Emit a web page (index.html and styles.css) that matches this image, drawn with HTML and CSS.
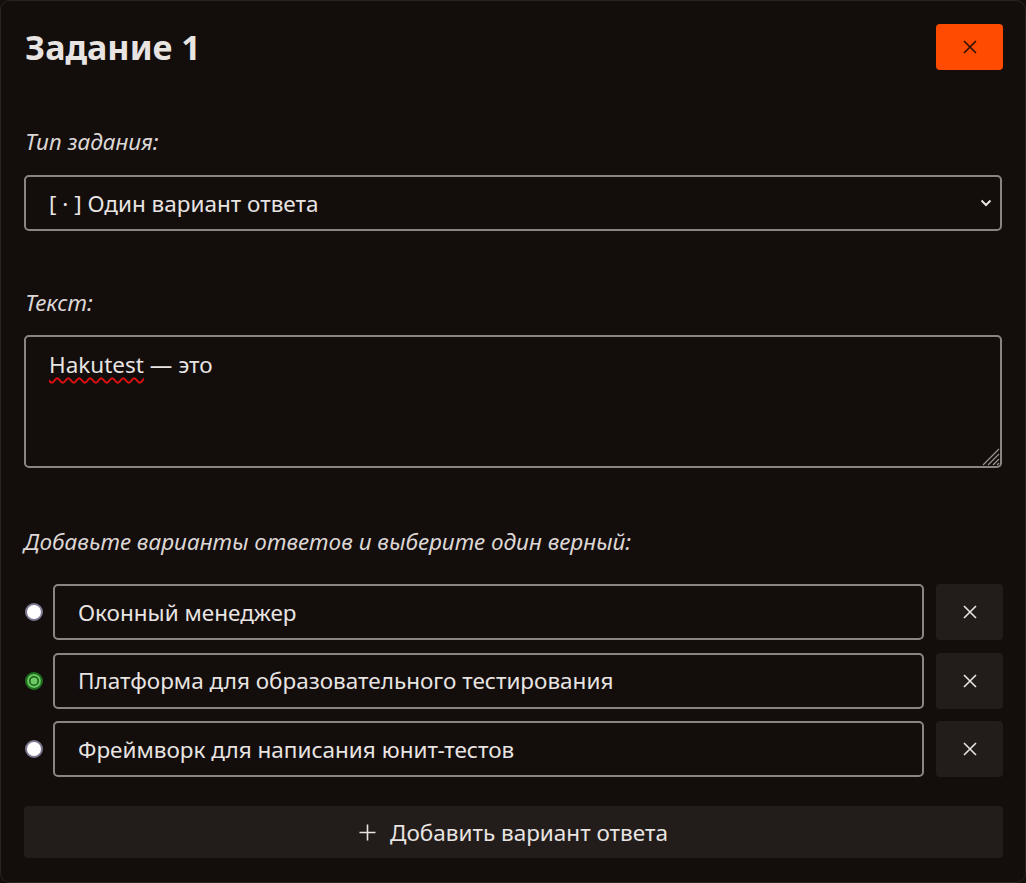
FILE: index.html
```html
<!DOCTYPE html>
<html lang="ru">
<head>
<meta charset="utf-8">
<title>Задание 1</title>
<link rel="stylesheet" href="styles.css">
</head>
<body>
<div class="card">
  <div class="header">
    <h1 class="title">Задание 1</h1>
    <button class="close-btn" aria-label="Закрыть">
      <svg width="16" height="16" viewBox="0 0 16 16"><path d="M2 2L14 14M14 2L2 14" stroke="#2a120a" stroke-width="1.6" fill="none"/></svg>
    </button>
  </div>

  <div class="label label-type">Тип задания:</div>
  <div class="select">
    <span>[ · ] Один вариант ответа</span>
    <svg class="chevron" width="12" height="8" viewBox="0 0 12 8"><path d="M1.5 1.5L6 6L10.5 1.5" stroke="#e8e4e2" stroke-width="2" fill="none"/></svg>
  </div>

  <div class="label label-text">Текст:</div>
  <div class="textarea">
    <span class="spell">Hakutest</span> — это
    <svg class="grip" width="20" height="20" viewBox="0 0 20 20"><path d="M19 3L3 19M19 8L8 19M19 13L13 19M19 17L17 19" stroke="#9a9593" stroke-width="1.2" fill="none"/></svg>
  </div>

  <div class="label label-answers">Добавьте варианты ответов и выберите один верный:</div>
  <div class="answers">
    <div class="answer">
      <span class="radio"></span>
      <div class="input">Оконный менеджер</div>
      <button class="del-btn" aria-label="Удалить"><svg width="16" height="16" viewBox="0 0 16 16"><path d="M2 2L14 14M14 2L2 14" stroke="#e8e4e2" stroke-width="1.6" fill="none"/></svg></button>
    </div>
    <div class="answer">
      <span class="radio checked"></span>
      <div class="input">Платформа для образовательного тестирования</div>
      <button class="del-btn" aria-label="Удалить"><svg width="16" height="16" viewBox="0 0 16 16"><path d="M2 2L14 14M14 2L2 14" stroke="#e8e4e2" stroke-width="1.6" fill="none"/></svg></button>
    </div>
    <div class="answer">
      <span class="radio"></span>
      <div class="input">Фреймворк для написания юнит-тестов</div>
      <button class="del-btn" aria-label="Удалить"><svg width="16" height="16" viewBox="0 0 16 16"><path d="M2 2L14 14M14 2L2 14" stroke="#e8e4e2" stroke-width="1.6" fill="none"/></svg></button>
    </div>
  </div>

  <button class="add-btn">
    <svg width="17" height="17" viewBox="0 0 17 17"><path d="M8.5 0.5V16.5M0.5 8.5H16.5" stroke="#e8e4e2" stroke-width="1.6" fill="none"/></svg>
    <span>Добавить вариант ответа</span>
  </button>
</div>
</body>
</html>
```

FILE: styles.css
```css
* { box-sizing: border-box; }
html, body {
  margin: 0;
  padding: 0;
  background: #130d0b;
}
body {
  font-family: "Noto Sans", "Open Sans", sans-serif;
  color: #e8e4e2;
}
.card {
  width: 1026px;
  height: 883px;
  border: 1px solid #2a2421;
  border-radius: 10px;
  background: #130d0b;
  padding: 23px 22px 24px 23px;
  display: flex;
  flex-direction: column;
}
.header {
  display: flex;
  align-items: center;
  justify-content: space-between;
  height: 46px;
}
.title {
  margin: 0 0 0 1px;
  font-size: 34px;
  font-weight: 700;
  line-height: 46px;
  color: #e8e4e2;
}
.close-btn {
  width: 67px;
  height: 46px;
  border: none;
  border-radius: 4px;
  background: #ff4b00;
  display: flex;
  align-items: center;
  justify-content: center;
  padding: 0;
}
.label {
  font-style: italic;
  font-size: 22.5px;
  line-height: 30px;
  color: #dcd7d5;
  margin-left: 1px;
}
.label-type { margin-top: 57px; }
.label-text { margin-top: 57px; }
.label-answers { margin-top: 59px; margin-left: 0; }
.select {
  margin-top: 18px;
  height: 56px;
  width: 978px;
  border: 2px solid #8a8583;
  border-radius: 5px;
  display: flex;
  align-items: center;
  justify-content: space-between;
  padding: 0 8px 0 23px;
  font-size: 22.5px;
}
.textarea {
  position: relative;
  margin-top: 17px;
  height: 133px;
  width: 978px;
  border: 2px solid #8a8583;
  border-radius: 5px;
  padding: 13px 23px;
  font-size: 22.5px;
  line-height: 30px;
}
.spell {
  text-decoration: underline wavy #e01010;
  text-decoration-thickness: 1.5px;
  text-underline-offset: 4px;
}
.grip {
  position: absolute;
  right: 0;
  bottom: 0;
}
.answers {
  margin-top: 27px;
  display: flex;
  flex-direction: column;
  gap: 12.5px;
}
.answer {
  display: flex;
  align-items: center;
  height: 56px;
}
.radio {
  width: 18px;
  height: 18px;
  border-radius: 50%;
  background: #ffffff;
  border: 2px solid #7d7891;
  margin-left: 1px;
  flex: none;
}
.radio.checked {
  background: #6cc963;
  border: 2px solid #1d6e1d;
  box-shadow: inset 0 0 0 2px #6cc963, inset 0 0 0 3.5px #175e17;
}
.input {
  margin-left: 10px;
  width: 871px;
  height: 56px;
  border: 2px solid #8a8583;
  border-radius: 5px;
  display: flex;
  align-items: center;
  padding: 0 23px;
  font-size: 22.5px;
  flex: none;
}
.del-btn {
  margin-left: 12px;
  width: 67px;
  height: 56px;
  border: none;
  border-radius: 4px;
  background: #221c1a;
  display: flex;
  align-items: center;
  justify-content: center;
  padding: 0;
  flex: none;
}
.add-btn {
  margin-top: 29px;
  width: 979px;
  height: 52px;
  border: none;
  border-radius: 4px;
  background: #221c1a;
  display: flex;
  align-items: center;
  justify-content: center;
  gap: 14px;
  font-family: inherit;
  font-size: 22.5px;
  color: #e8e4e2;
  padding: 0;
}
```
